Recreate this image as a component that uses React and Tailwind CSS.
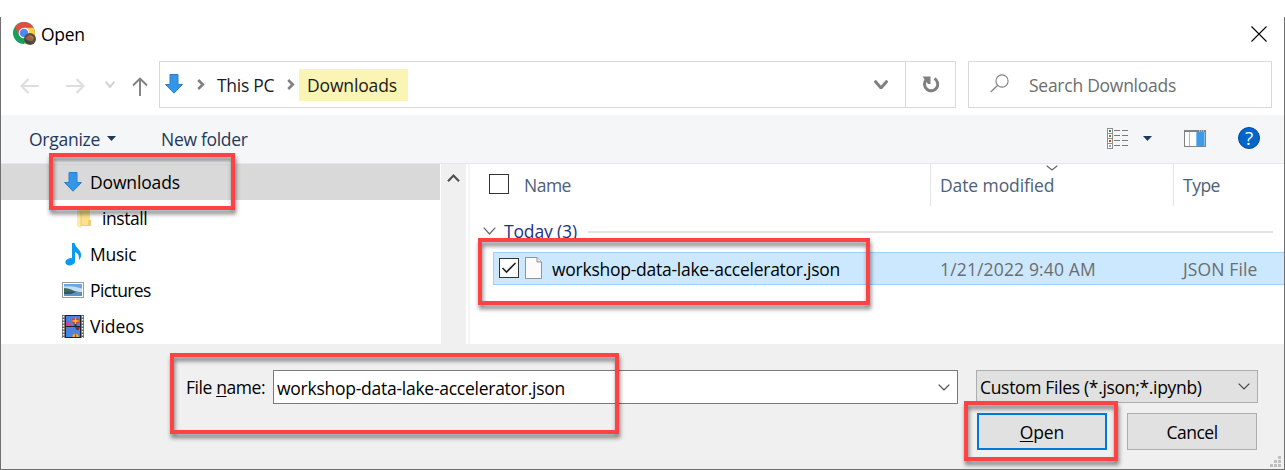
const HighlightBox = ({ className }) => (
  <div
    className={`pointer-events-none absolute border-[4px] border-[#ff4343] drop-shadow-[1px_4px_2px_rgba(0,0,0,0.5)] ${className}`}
  />
);

const DownArrow = ({ className }) => (
  <svg className={className} width="18" height="20" viewBox="0 0 18 20">
    <path d="M5 .5h8v10h4.500L9 19.200.5 10.500H5z" fill="#3496e8" stroke="#2b7fc7" />
  </svg>
);

const Chevron = ({ className, color = "#444", w = 13, h = 7, stroke = 1.2 }) => (
  <svg className={className} width={w} height={h} viewBox={`0 0 ${w} ${h}`}>
    <path
      d={`M.7.7L${w / 2} ${h - 1}L${w - 0.7}.7`}
      fill="none"
      stroke={color}
      strokeWidth={stroke}
    />
  </svg>
);

const Caret = ({ className }) => (
  <svg className={className} width="9" height="5" viewBox="0 0 9 5">
    <path d="M0 0h9L4.500 5z" fill="#1e395b" />
  </svg>
);

const Crumb = ({ className }) => (
  <svg className={className} width="8" height="11" viewBox="0 0 8 11">
    <path d="M1.200 1l4.600 4.500L1.200 10" fill="none" stroke="#808080" strokeWidth="2.600" />
  </svg>
);

const ChromeIcon = () => (
  <svg width="23" height="23" viewBox="0 0 23 23">
    <circle cx="11" cy="11" r="11" fill="#17a05d" />
    <path d="M1.800 5A11 11 0 0 1 20.530 5.500L11 5.800L6.300 13.500z" fill="#dd4f43" />
    <path d="M11 5.700H20.600A11 11 0 0 1 11 22l4.700-8.200z" fill="#ffce43" />
    <circle cx="11" cy="11" r="5.300" fill="#fff" />
    <circle cx="11" cy="11" r="4.300" fill="#4c8bf5" />
    <circle cx="17" cy="17" r="6" fill="#5b4c3f" />
    <path d="M12.500 16.500q2-4 5-3.500q4 1 3.500 4q-2 3-5 2z" fill="#94683f" />
    <path d="M12 19q4 0 6 2.500" fill="none" stroke="#3d444b" strokeWidth="2" />
    <path d="M17 14l3 2" stroke="#b98a5c" />
  </svg>
);

const ViewIcon = () => (
  <svg width="22" height="22" viewBox="0 0 22 22">
    {["#3a7a94", "#6d8a33", "#c04428", "#8ba6c4"].map((c, i) => (
      <g key={c}>
        <rect x=".5" y={0.5 + i * 5} width="5" height="5" fill="#fff" stroke="#8f8f8f" />
        <rect x="2" y={2 + i * 5} width="2" height="2" fill={c} />
        <path d={`M7 ${2.5 + i * 5}h6M15 ${2.5 + i * 5}h6`} stroke="#7a7a7a" />
      </g>
    ))}
  </svg>
);

const PaneIcon = () => (
  <svg width="22" height="17" viewBox="0 0 22 17">
    <rect x=".5" y=".5" width="21" height="16" fill="#fff" stroke="#808285" />
    <path d="M0 1h22" stroke="#808285" strokeWidth="2" />
    <path d="M15 1h1M17 1h1M19 1h1" stroke="#eee" />
    <path d="M5.500 2v14" stroke="#b5b5b5" />
    <rect x="12" y="2" width="9" height="14" fill="#3f9be6" />
    <path d="M12.500 2v14M20.500 2v14" stroke="#7fc0f4" />
  </svg>
);

const FolderIcon = () => (
  <svg width="14" height="21" viewBox="0 0 14 21">
    <path d="M0 1h13v16H0z" fill="#ffe08a" />
    <path d="M0 1l4 2v17.500L0 18z" fill="#ffe9a6" />
    <path d="M4 3v15" stroke="#e9c25f" strokeWidth=".7" />
    <path d="M11 12h3v6H4v-1h7z" fill="#f3cd6d" />
  </svg>
);

const MusicIcon = () => (
  <svg width="17" height="23" viewBox="0 0 17 23">
    <ellipse cx="5.200" cy="18.800" rx="4.900" ry="3.600" fill="#0a9bf0" transform="rotate(-12 5.200 18.800)" />
    <path
      d="M7 0h2.600c.5 4.500 6.500 6.500 6.500 12 0 2.200-.7 3.700-2.300 5.200.7-3.600-.2-6.700-3.700-8.200v9.500H7z"
      fill="#0a9bf0"
    />
  </svg>
);

const PictureIcon = () => (
  <svg width="22" height="16" viewBox="0 0 22 16">
    <rect x=".5" y=".5" width="21" height="15" fill="#fff" stroke="#9a9a9a" />
    <rect x="2" y="2" width="18" height="12" fill="#6ea6e6" />
    <path d="M2 4.500q8-1 18 2v4H2z" fill="#c6e0f3" />
    <path d="M2 6q4 0 7 1.500t8 2.500H2z" fill="#3d6b52" />
    <path d="M2 10h18v4H2z" fill="#5b95bd" />
    <path d="M2 10h12l-5 2H2z" fill="#2c5a63" />
  </svg>
);

const VideoIcon = () => (
  <svg width="22" height="23" viewBox="0 0 22 23">
    <rect width="22" height="23" fill="#6a6a6a" />
    <rect x="3" width="16" height="23" fill="#1f2530" />
    <rect x="4" y="1" width="14" height="10" fill="#4b83dd" />
    <rect x="4" y="12" width="14" height="10" fill="#4b83dd" />
    <path d="M1.500 1v22M20.500 1v22" stroke="#fff" strokeWidth="1.500" strokeDasharray="1.500 1.500" />
    <path d="M4 8l2-1.500L9 9l1 2H4z" fill="#e0417f" />
    <ellipse cx="13.500" cy="6" rx="3.500" ry="3" fill="#e3342b" />
    <path d="M13.500 3v6M10.500 6h6" stroke="#f6c52c" strokeWidth="1.300" />
    <path d="M12.500 9h2v2h-2z" fill="#332" />
    <path d="M13 12h5l-1.500 3H14.500z" fill="#8a2430" />
    <path d="M10.500 22q0-3.500 3-3.500t3 3.500z" fill="#f0b92b" />
    <path d="M13.500 18.500V22" stroke="#d63a2b" strokeWidth="1.300" />
  </svg>
);

const FileIcon = () => (
  <svg width="17" height="22" viewBox="0 0 17 22">
    <path d="M.5.5h11.500l4.500 4.500v16.500H.5z" fill="#fbfbfb" stroke="#8d959b" />
    <path d="M12 .5v4.500h4.500" fill="#e8e8e8" stroke="#8d959b" />
  </svg>
);

const NavRow = ({ icon, label, pad, iconBox, text = "" }) => (
  <div className={`flex h-[36px] items-center ${pad}`}>
    <span className={`flex shrink-0 items-center ${iconBox}`}>{icon}</span>
    <span className={text}>{label}</span>
  </div>
);

export default function App() {
  return (
    <div className="relative h-[470px] w-[1285px] overflow-hidden bg-white pt-[17px] font-['Open_Sans',sans-serif] text-[17.5px] leading-[24px] tracking-[-0.26px] whitespace-nowrap text-black">
      <div className="flex h-[453px] flex-col border-x border-b border-[#6f6f6f] bg-white">
        <header className="flex h-[44px] shrink-0 items-start pl-[12px]">
          <div className="mt-[5px] mr-[5px]">
            <ChromeIcon />
          </div>
          <span className="mt-[5px]">Open</span>
          <svg className="mt-[9px] mr-[17px] ml-auto" width="16" height="16" viewBox="0 0 16 16">
            <path d="M.5.5l15 15M15.500.5l-15 15" stroke="#000" strokeWidth="1.100" />
          </svg>
        </header>

        <div className="flex h-[54px] shrink-0 pr-[12px]">
          <div className="flex h-[47px] w-[158px] shrink-0 items-center">
            <svg className="mt-[2px] ml-[19px]" width="20" height="16" viewBox="0 0 20 16">
              <path d="M8.500 1L1.500 8l7 7M1.500 8H19" fill="none" stroke="#dedede" strokeWidth="2.200" />
            </svg>
            <svg className="mt-[2px] ml-[25px]" width="20" height="16" viewBox="0 0 20 16">
              <path d="M11.500 1l7 7-7 7M18.500 8H1" fill="none" stroke="#dedede" strokeWidth="2.200" />
            </svg>
            <Chevron className="ml-[20px]" color="#d4d4d4" w={10} h={7} stroke={2} />
            <svg className="mt-[4px] ml-[17px]" width="16" height="20" viewBox="0 0 16 20">
              <path d="M1 8.500L8 1.500l7 7M8 1.500V19" fill="none" stroke="#808080" strokeWidth="1.900" />
            </svg>
          </div>
          <div className="flex h-[47px] w-[797px] shrink-0 items-center border border-[#d9d9d9] text-[#1a1a1a]">
            <DownArrow className="-mt-px ml-[5px]" />
            <Crumb className="ml-[14px]" />
            <span className="ml-[12px] w-[57px] tracking-[-0.3px]">This PC</span>
            <Crumb className="ml-[13px]" />
            <span className="ml-[4px] flex h-[32px] w-[109px] items-center bg-[#faf4b5] pl-[8px] tracking-[-0.15px]">
              Downloads
            </span>
            <Chevron className="mr-[17px] ml-auto" color="#808080" w={14} h={9} stroke={3} />
            <div className="flex h-full w-[50px] items-center justify-center border-l border-[#d9d9d9]">
              <svg width="17" height="17" viewBox="0 0 17 17">
                <path d="M12.500 2.500A6.600 6.600 0 1 1 4 4" fill="none" stroke="#808080" strokeWidth="3" />
                <path d="M.5.500h8v7.500h-2.500z" fill="#808080" />
              </svg>
            </div>
          </div>
          <div className="ml-[12px] flex h-[47px] flex-1 items-center border border-[#d9d9d9] text-[#6d6d6d]">
            <svg className="-mt-[3px] ml-[21px]" width="19" height="19" viewBox="0 0 19 19">
              <circle cx="12" cy="7" r="6.100" fill="none" stroke="#808080" strokeWidth="1.100" />
              <path d="M7.500 11.500L.7 18" stroke="#808080" strokeWidth="1.200" />
            </svg>
            <span className="ml-[20px]">Search Downloads</span>
          </div>
        </div>

        <div className="flex h-[49px] shrink-0 items-center border-b border-[#e5e7ea] bg-[#f5f6f7] text-[#1e395b]">
          <span className="ml-[28px] w-[72px]">Organize</span>
          <Caret className="-mt-[2px] ml-[6px]" />
          <span className="ml-[45px] tracking-[-0.3px]">New folder</span>
          <div className="-mt-px ml-auto flex items-center pr-[24px]">
            <ViewIcon />
            <Caret className="mr-[32px] ml-[14px]" />
            <PaneIcon />
            <div className="-mt-px ml-[32px] flex h-[22px] w-[22px] items-center justify-center rounded-full border border-[#004a98] bg-[#0066cc] text-[19px] leading-none text-white">
              ?
            </div>
          </div>
        </div>

        <div className="flex h-[180px] shrink-0">
          <nav className="w-[439px] shrink-0 overflow-hidden">
            <NavRow
              icon={<DownArrow />}
              label="Downloads"
              pad="bg-[#d9d9d9] pl-[63px]"
              iconBox="w-[26px]"
              text="tracking-[-0.15px]"
            />
            <NavRow
              icon={<FolderIcon />}
              label="install"
              pad="pl-[76px]"
              iconBox="w-[25px]"
              text="tracking-[-0.45px]"
            />
            <NavRow icon={<MusicIcon />} label="Music" pad="pl-[64px]" iconBox="w-[25px]" />
            <NavRow
              icon={<PictureIcon />}
              label="Pictures"
              pad="pl-[61px]"
              iconBox="w-[28px]"
              text="tracking-[-0.6px]"
            />
            <NavRow
              icon={<VideoIcon />}
              label="Videos"
              pad="pl-[61px]"
              iconBox="w-[28px]"
              text="tracking-[-0.05px]"
            />
          </nav>
          <div className="ml-px w-[25px] shrink-0 bg-[#f0f0f0] pt-[9px] pl-[6px]">
            <svg width="13" height="10" viewBox="0 0 13 10">
              <path d="M1 8.200L6.500 2.500 12 8.200" fill="none" stroke="#505050" strokeWidth="2.200" />
            </svg>
          </div>
          <div className="ml-[2px] w-[2px] shrink-0 bg-[#f5f5f5]" />
          <main className="flex-1">
            <div className="flex h-[42px] text-[#4c607a]">
              <div className="flex w-[461px] items-center border-r border-[#e5e5e5] pl-[19px]">
                <span className="-mt-[2px] h-[20px] w-[20px] border border-[#333] bg-white" />
                <span className="ml-[15px] tracking-[-0.5px]">Name</span>
              </div>
              <div className="relative flex w-[243px] items-center border-r border-[#e5e5e5] pl-[9px] tracking-[-0.1px]">
                <Chevron className="absolute top-[1px] left-[115px]" w={12} h={6} color="#666" />
                Date modified
              </div>
              <div className="flex items-center pl-[9px] tracking-[-0.5px]">Type</div>
            </div>
            <div className="mt-[13px] flex h-[24px] items-center pl-[13px] text-[#1e3287]">
              <Chevron className="-mt-px" w={13} h={8} color="#666" />
              <span className="ml-[8px] w-[84px] tracking-[-0.15px]">Today (3)</span>
              <span className="mt-px mr-[11px] h-[2px] flex-1 bg-[#e2e2e2]" />
            </div>
            <div className="mt-[9px] ml-[23px] flex h-[33px] items-center border-y border-l border-[#99d1ff] bg-[#cce8ff]">
              <span className="ml-[5px] -mt-px flex h-[20px] w-[20px] items-center justify-center border border-[#333] bg-white">
                <svg width="16" height="12" viewBox="0 0 16 12">
                  <path d="M1.500 6l4 4L14.500 1" fill="none" stroke="#222" strokeWidth="1.600" />
                </svg>
              </span>
              <span className="ml-[6px] -mt-px">
                <FileIcon />
              </span>
              <span className="ml-[10px] w-[388px]">workshop-data-lake-accelerator.json</span>
              <span className="w-[243px] tracking-[0.15px] text-[#6d6d6d]">1/21/2022 9:40 AM</span>
              <span className="tracking-[0.12px] text-[#6d6d6d]">JSON File</span>
            </div>
          </main>
        </div>

        <footer className="flex-1 bg-[#f0f0f0] pt-[26px]">
          <div className="flex items-start">
            <span className="mt-[5px] ml-[185px] w-[87px] tracking-[-0.42px]">
              File <span className="underline underline-offset-2">n</span>ame:
            </span>
            <div className="flex h-[34px] w-[685px] items-center border border-[#7a7a7a] bg-white pl-[3px]">
              <span className="pt-[2px]">workshop-data-lake-accelerator.json</span>
              <Chevron className="mr-[7px] ml-auto" w={12} h={7} />
            </div>
            <div className="ml-[18px] flex h-[33px] w-[282px] items-center border border-[#adadad] bg-[#e1e1e1] pl-[3px] tracking-[-0.32px]">
              <span className="pt-px">Custom Files (*.json;*.ipynb)</span>
              <Chevron className="mr-[7px] ml-auto" w={12} h={7} />
            </div>
          </div>
          <div className="mt-[9px] flex pl-[976px]">
            <button className="h-[37px] w-[130px] border-2 border-[#0078d7] bg-[#e1e1e1] pt-px tracking-[-0.1px]">
              <span className="underline underline-offset-2">O</span>pen
            </button>
            <button className="ml-[20px] h-[37px] w-[130px] border border-[#adadad] bg-[#e1e1e1] pt-px tracking-[-0.5px]">
              Cancel
            </button>
          </div>
        </footer>
      </div>

      <svg className="absolute right-[4px] bottom-[3px]" width="11" height="11" viewBox="0 0 11 11">
        <path
          d="M8 0h3v3H8zM4 4h3v3H4zM8 4h3v3H8zM0 8h3v3H0zM4 8h3v3H4zM8 8h3v3H8z"
          fill="#bfbfbf"
        />
      </svg>

      <HighlightBox className="top-[153px] left-[49px] h-[57px] w-[186px]" />
      <HighlightBox className="top-[238px] left-[478px] h-[67px] w-[392px]" />
      <HighlightBox className="top-[353px] left-[170px] h-[81px] w-[449px]" />
      <HighlightBox className="top-[401px] left-[964px] h-[60px] w-[154px]" />
    </div>
  );
}
